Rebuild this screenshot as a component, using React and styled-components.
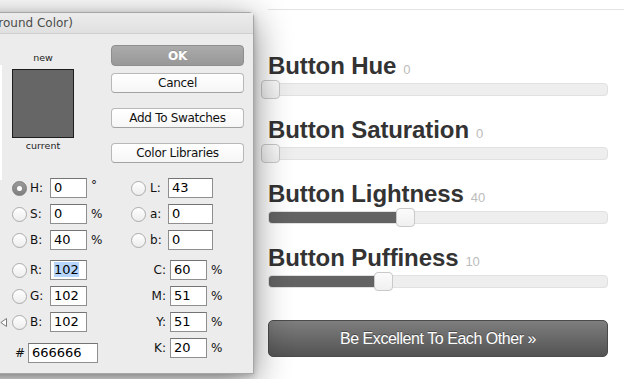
import React from 'react'
import styled, { createGlobalStyle, css } from 'styled-components'

const GlobalStyle = createGlobalStyle`
  html, body {
    margin: 0;
    padding: 0;
    background: #fff;
  }
  body {
    width: 624px;
    height: 379px;
    overflow: hidden;
  }
`

const Screen = styled.div`
  position: relative;
  width: 624px;
  height: 379px;
  overflow: hidden;
  background: #fff;
  font-family: "Liberation Sans", Arial, sans-serif;
`

/* ---------- page behind the dialog ---------- */

const Page = styled.main`
  padding: 9px 0 0 268px;
`

const Rule = styled.hr`
  margin: 0;
  height: 0;
  border: 0;
  border-top: 1px solid #e4e4e4;
`

const Controls = styled.div`
  width: 340px;
  margin-top: 42px;
  display: flex;
  flex-direction: column;
  gap: 20px;
`

const Setting = styled.div`
  display: flex;
  flex-direction: column;
  gap: 3px;
`

const Heading = styled.h2`
  margin: 0;
  height: 28px;
  font: 700 24px/28px "Liberation Sans", Arial, sans-serif;
  color: #333;
  letter-spacing: -0.1px;
  white-space: nowrap;
`

const Value = styled.span`
  margin-left: 7px;
  font-size: 13px;
  line-height: 1;
  font-weight: 400;
  letter-spacing: 0;
  color: #bcbcbc;
`

const Track = styled.div`
  position: relative;
  height: 11px;
  background: #eee;
  border: 1px solid #e1e1e1;
  border-radius: 4px;
`

const Fill = styled.div`
  position: absolute;
  left: 0;
  top: 0;
  bottom: 0;
  background: #636363;
  border-radius: 3px 0 0 3px;
`

const Handle = styled.div`
  position: absolute;
  top: -4px;
  width: 19px;
  height: 19px;
  box-sizing: border-box;
  background: linear-gradient(#fbfbfb, #f0f0f0);
  border: 1px solid #c9c9c9;
  border-radius: 4px;
`

const BigButton = styled.button`
  margin-top: 32px;
  width: 340px;
  height: 37px;
  border: 1px solid #4b4b4b;
  border-radius: 5px;
  background: linear-gradient(#7e7e7e, #535353);
  color: #fff;
  font: 400 16px "Liberation Sans", Arial, sans-serif;
  letter-spacing: -0.45px;
  text-shadow: 0 -1px 0 rgba(0, 0, 0, 0.35);
  cursor: pointer;
`

const Slider = ({ label, value, max }) => {
  const pct = (value / max) * 100
  return (
    <Setting>
      <Heading>
        {label}
        <Value>{value}</Value>
      </Heading>
      <Track>
        {pct > 0 ? <Fill style={{ width: `${pct}%` }} /> : null}
        <Handle style={{ left: `calc(${pct}% - 8px)` }} />
      </Track>
    </Setting>
  )
}

/* ---------- colour picker dialog ---------- */

const Dialog = styled.section`
  position: absolute;
  top: 12px;
  left: -300px;
  width: 554px;
  height: 362px;
  box-sizing: border-box;
  display: flex;
  flex-direction: column;
  background: #ececec;
  border: 1px solid #a6a6a6;
  border-radius: 5px 5px 0 0;
  box-shadow: 0 8px 36px rgba(0, 0, 0, 0.48), 0 2px 6px rgba(0, 0, 0, 0.2);
  font-family: "DejaVu Sans", Verdana, sans-serif;
  color: #111;
  z-index: 2;
`

const TitleBar = styled.header`
  height: 20px;
  display: flex;
  align-items: center;
  justify-content: flex-end;
  padding-right: 180px;
  background: linear-gradient(#ececec, #e0e0e0);
  border-bottom: 1px solid #cfcfcf;
  font-size: 12px;
  color: #4c4c4c;
  white-space: nowrap;
`

const Body = styled.div`
  position: relative;
  flex: 1;
  display: flex;
`

const PickerPane = styled.div`
  position: relative;
  width: 299px;
  flex: none;
`

const HueEdge = styled.div`
  position: absolute;
  right: -2px;
  top: 31px;
  width: 2px;
  height: 115px;
  background: #fff;
`

const Pointer = styled.svg`
  position: absolute;
  right: -7px;
  top: 284px;
`

const ValuesPane = styled.div`
  width: 253px;
  padding-top: 11px;
  display: flex;
  flex-direction: column;
`

const TopRow = styled.div`
  display: flex;
  align-items: flex-start;
`

const SwatchColumn = styled.div`
  margin-left: 12px;
  width: 62px;
  padding-top: 6px;
  display: flex;
  flex-direction: column;
  align-items: center;
`

const Caption = styled.span`
  font-size: 9.5px;
  line-height: 14px;
  color: #222;
`

const Swatch = styled.div`
  width: 62px;
  height: 69px;
  margin: 4px 0 1px;
  box-sizing: border-box;
  background: #666666;
  border: 1px solid #1d1d1d;
`

const ButtonColumn = styled.div`
  margin-left: 37px;
  width: 133px;
  display: flex;
  flex-direction: column;
`

const DialogButton = styled.button`
  height: 20px;
  margin-top: ${p => p.$gap || 0}px;
  padding: 0;
  box-sizing: border-box;
  border-radius: 4px;
  font: 400 12px "DejaVu Sans", Verdana, sans-serif;
  letter-spacing: -0.3px;
  color: #111;
  background: linear-gradient(#fff, #f6f6f6);
  border: 1px solid #b8b8b8;
  border-bottom-color: #a2a2a2;

  ${p => p.$primary && css`
    height: 21px;
    font-weight: 700;
    color: #fff;
    background: linear-gradient(#ababab, #989898);
    border: 1px solid #8e8e8e;
    text-shadow: 0 -1px 0 rgba(0, 0, 0, 0.15);
  `}
`

const Fields = styled.div`
  margin-top: 15px;
  padding-left: 12px;
  display: flex;
  align-items: flex-start;
`

const FieldGroup = styled.div`
  display: flex;
  flex-direction: column;
  gap: 6px;
  margin-left: ${p => p.$offset || 0}px;
`

const Row = styled.div`
  display: grid;
  grid-template-columns: ${p => p.$cols};
  align-items: center;
  height: 20px;
  margin-top: ${p => p.$gap || 0}px;
  font-size: 12px;
`

const Radio = styled.span`
  width: 15px;
  height: 15px;
  box-sizing: border-box;
  border-radius: 50%;
  border: 1px solid #ababab;
  background: linear-gradient(#fff, #ededed);
  display: flex;
  align-items: center;
  justify-content: center;

  ${p => p.$checked && css`
    border-color: #7b7b7b;
    background: linear-gradient(#9a9a9a, #808080);
    &::after {
      content: "";
      width: 5px;
      height: 5px;
      border-radius: 50%;
      background: #fff;
    }
  `}
`

const Label = styled.span`
  padding-left: ${p => p.$pad ?? 3}px;
  padding-right: ${p => p.$right || 0}px;
  text-align: ${p => (p.$right ? 'right' : 'left')};
  color: #111;
`

const Field = styled.div`
  height: 20px;
  box-sizing: border-box;
  padding-left: 3px;
  background: #fff;
  border: 1px solid #8f8f8f;
  border-top-color: #747474;
  font-size: 13px;
  line-height: 18px;
  color: #000;
  white-space: nowrap;
`

const Selected = styled.span`
  background: #b5d5fd;
`

const Unit = styled.span`
  padding-left: 4px;
  font-size: 12px;
  align-self: ${p => (p.$raised ? 'start' : 'center')};
`

const hsb = [
  { key: 'H', value: '0', unit: '°', checked: true },
  { key: 'S', value: '0', unit: '%' },
  { key: 'B', value: '40', unit: '%' }
]

const rgb = [
  { key: 'R', value: '102', selected: true },
  { key: 'G', value: '102' },
  { key: 'B', value: '102' }
]

const lab = [
  { key: 'L', value: '43' },
  { key: 'a', value: '0' },
  { key: 'b', value: '0' }
]

const cmyk = [
  { key: 'C', value: '60' },
  { key: 'M', value: '51' },
  { key: 'Y', value: '51' },
  { key: 'K', value: '20' }
]

const LEFT_COLS = '15px 23px 37px 14px'
const LAB_COLS = '15px 22px 45px'
const CMYK_COLS = '39px 37px 14px'

const ColorPicker = () => (
  <Dialog>
    <TitleBar>Color Picker (Foreground Color)</TitleBar>
    <Body>
      <PickerPane>
        <HueEdge />
        <Pointer width='7' height='9' viewBox='0 0 7 9'>
          <polygon points='6.5,0.5 0.8,4.5 6.5,8.5' fill='#fff' stroke='#7a7a7a' strokeWidth='1' />
        </Pointer>
      </PickerPane>
      <ValuesPane>
        <TopRow>
          <SwatchColumn>
            <Caption>new</Caption>
            <Swatch />
            <Caption>current</Caption>
          </SwatchColumn>
          <ButtonColumn>
            <DialogButton $primary>OK</DialogButton>
            <DialogButton $gap={7}>Cancel</DialogButton>
            <DialogButton $gap={15}>Add To Swatches</DialogButton>
            <DialogButton $gap={15}>Color Libraries</DialogButton>
          </ButtonColumn>
        </TopRow>

        <Fields>
          <FieldGroup>
            {hsb.map(f => (
              <Row key={f.key} $cols={LEFT_COLS}>
                <Radio $checked={f.checked} />
                <Label>{f.key}:</Label>
                <Field>{f.value}</Field>
                <Unit $raised={f.unit === '°'}>{f.unit}</Unit>
              </Row>
            ))}
            {rgb.map((f, i) => (
              <Row key={f.key + i} $cols={LEFT_COLS} $gap={i === 0 ? 4 : 0}>
                <Radio />
                <Label>{f.key}:</Label>
                <Field>{f.selected ? <Selected>{f.value}</Selected> : f.value}</Field>
              </Row>
            ))}
            <Row $cols='16px 70px' $gap={5}>
              <Label>#</Label>
              <Field>666666</Field>
            </Row>
          </FieldGroup>

          <FieldGroup $offset={30}>
            {lab.map(f => (
              <Row key={f.key} $cols={LAB_COLS}>
                <Radio />
                <Label $pad={4}>{f.key}:</Label>
                <Field>{f.value}</Field>
              </Row>
            ))}
            {cmyk.map((f, i) => (
              <Row key={f.key} $cols={CMYK_COLS} $gap={i === 0 ? 4 : 0}>
                <Label $pad={0} $right={4}>{f.key}:</Label>
                <Field>{f.value}</Field>
                <Unit>%</Unit>
              </Row>
            ))}
          </FieldGroup>
        </Fields>
      </ValuesPane>
    </Body>
  </Dialog>
)

const App = () => (
  <Screen>
    <GlobalStyle />
    <Page>
      <Rule />
      <Controls>
        <Slider label='Button Hue' value={0} max={360} />
        <Slider label='Button Saturation' value={0} max={100} />
        <Slider label='Button Lightness' value={40} max={100} />
        <Slider label='Button Puffiness' value={10} max={30} />
      </Controls>
      <BigButton>Be Excellent To Each Other »</BigButton>
    </Page>
    <ColorPicker />
  </Screen>
)

export default App
